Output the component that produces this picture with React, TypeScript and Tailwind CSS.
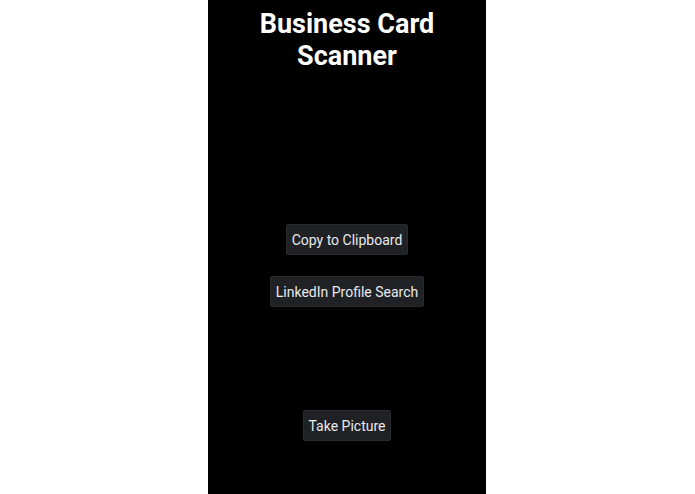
import React from 'react';

const buttonClass =
  "bg-[#202124] text-[#e8eaed] text-[14px] leading-[31px] h-[31px] px-[5px] rounded-[2px] border border-[#2a2b2e]";

export default function App() {
  return (
    <div className="w-full h-[494px] bg-white flex font-['Roboto',sans-serif]">
      <div className="ml-[208px] w-[278px] h-full bg-black flex flex-col items-center">
        <h1 className="mt-[8px] text-white text-[27px] font-bold leading-[32px] text-center">
          Business Card
          <br />
          Scanner
        </h1>
        <button className={`${buttonClass} mt-[152px]`}>Copy to Clipboard</button>
        <button className={`${buttonClass} mt-[21px]`}>LinkedIn Profile Search</button>
        <button className={`${buttonClass} mt-[103px]`}>Take Picture</button>
      </div>
    </div>
  );
}
